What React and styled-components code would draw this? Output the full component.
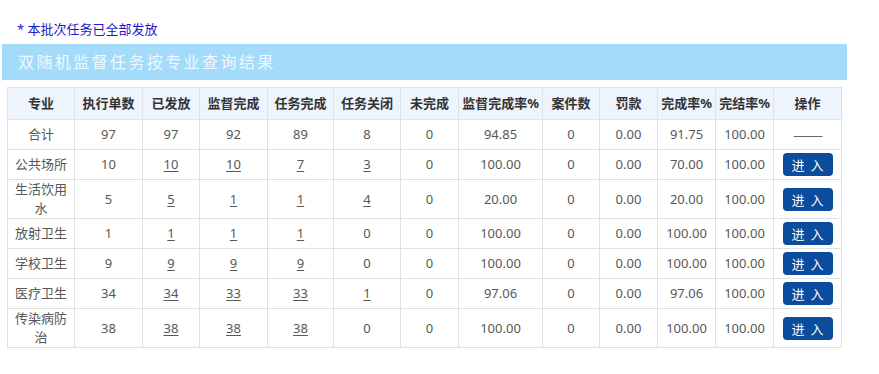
import React from "react";
import styled, { createGlobalStyle } from "styled-components";

const Global = createGlobalStyle`
  html, body { margin: 0; padding: 0; background: #fff; }
  body { font-family: "Noto Sans", "Noto Sans CJK SC", sans-serif; }
`;

const Page = styled.div`
  width: 879px;
  padding-top: 20px;
`;

const Notice = styled.div`
  padding-left: 17px;
  font-size: 13px;
  line-height: 18px;
  color: #1a1ac8;
  margin-bottom: 6px;
`;

const TitleBar = styled.div`
  margin-left: 2px;
  width: 845px;
  height: 36px;
  box-sizing: border-box;
  padding-left: 16px;
  background: #a5dbfa;
  color: #eef8ff;
  font-size: 16px;
  letter-spacing: 2.4px;
  line-height: 36px;
`;

const TableWrap = styled.div`
  padding: 7px 0 0 7px;
`;

const Table = styled.table`
  border-collapse: collapse;
  table-layout: fixed;
  width: 835px;
  font-size: 13px;
  color: #585858;
`;

const Th = styled.th`
  height: 31px;
  padding: 0 2px;
  border: 1px solid #dde3ea;
  background: #eef4fc;
  color: #333;
  font-weight: bold;
  line-height: 19px;
  text-align: center;
  white-space: nowrap;
`;

const Td = styled.td`
  height: 29px;
  padding: 0 4px;
  border: 1px solid #e0e0e0;
  line-height: 19px;
  text-align: center;
`;

const Link = styled.a`
  color: #585858;
  text-decoration: underline;
  text-underline-offset: 2px;
  cursor: pointer;
`;

const Dash = styled.span`
  display: inline-block;
  font-family: "Noto Sans CJK SC", sans-serif;
  color: #444;
  transform: scaleX(1.4);
`;

const EnterButton = styled.button`
  display: inline-block;
  width: 50px;
  height: 23px;
  padding: 0;
  border: none;
  border-radius: 4px;
  background: #0b4c9c;
  color: #fff;
  font-family: "Noto Sans CJK SC", sans-serif;
  font-size: 13px;
  word-spacing: 3px;
  line-height: 23px;
  vertical-align: middle;
  cursor: pointer;
`;

const widths = [67, 68, 57, 68, 66, 67, 58, 84, 57, 58, 58, 58, 68];
const heads = ["专业", "执行单数", "已发放", "监督完成", "任务完成", "任务关闭", "未完成", "监督完成率%", "案件数", "罚款", "完成率%", "完结率%", "操作"];

const rows = [
  ["合计", "97", "97", "92", "89", "8", "0", "94.85", "0", "0.00", "91.75", "100.00", true],
  ["公共场所", "10", "10", "10", "7", "3", "0", "100.00", "0", "0.00", "70.00", "100.00"],
  ["生活饮用水", "5", "5", "1", "1", "4", "0", "20.00", "0", "0.00", "20.00", "100.00"],
  ["放射卫生", "1", "1", "1", "1", "0", "0", "100.00", "0", "0.00", "100.00", "100.00"],
  ["学校卫生", "9", "9", "9", "9", "0", "0", "100.00", "0", "0.00", "100.00", "100.00"],
  ["医疗卫生", "34", "34", "33", "33", "1", "0", "97.06", "0", "0.00", "97.06", "100.00"],
  ["传染病防治", "38", "38", "38", "38", "0", "0", "100.00", "0", "0.00", "100.00", "100.00"],
];

const cell = (v, linkable) => (linkable && v !== "0" ? <Link>{v}</Link> : v);

export default function App() {
  return (
    <Page>
      <Global />
      <Notice>* 本批次任务已全部发放</Notice>
      <TitleBar>双随机监督任务按专业查询结果</TitleBar>
      <TableWrap>
        <Table>
          <colgroup>
            {widths.map((w, i) => (
              <col key={i} style={{ width: w }} />
            ))}
          </colgroup>
          <thead>
            <tr>
              {heads.map((h) => (
                <Th key={h}>{h}</Th>
              ))}
            </tr>
          </thead>
          <tbody>
            {rows.map((r) => {
              const total = r[12] === true;
              return (
                <tr key={r[0]}>
                  <Td>{r[0]}</Td>
                  <Td>{r[1]}</Td>
                  <Td>{cell(r[2], !total)}</Td>
                  <Td>{cell(r[3], !total)}</Td>
                  <Td>{cell(r[4], !total)}</Td>
                  <Td>{cell(r[5], !total)}</Td>
                  <Td>{r[6]}</Td>
                  <Td>{r[7]}</Td>
                  <Td>{r[8]}</Td>
                  <Td>{r[9]}</Td>
                  <Td>{r[10]}</Td>
                  <Td>{r[11]}</Td>
                  <Td>{total ? <Dash>——</Dash> : <EnterButton>进 入</EnterButton>}</Td>
                </tr>
              );
            })}
          </tbody>
        </Table>
      </TableWrap>
    </Page>
  );
}
